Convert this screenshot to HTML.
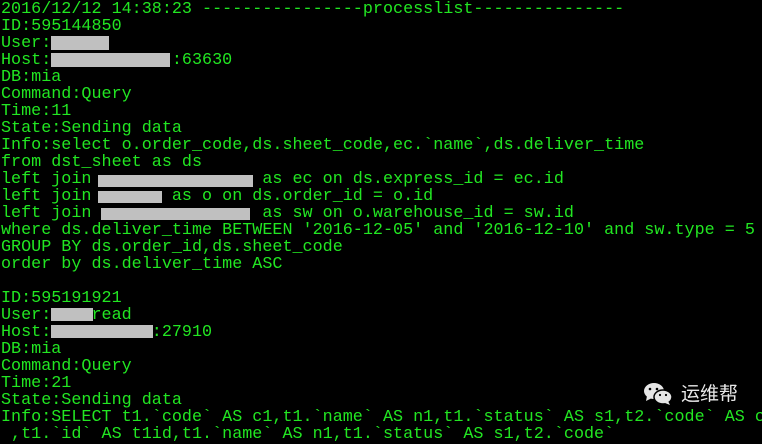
<!DOCTYPE html>
<html><head><meta charset="utf-8"><style>
html,body{margin:0;padding:0;background:#000;width:762px;height:430px;overflow:hidden}
pre{margin:0;padding:0 0 0 1px;font-family:"Liberation Mono",monospace;font-size:16.75px;line-height:17px;color:#22e622;white-space:pre;position:absolute;top:1px;left:0}
.b{position:absolute;background:#c0c0c0}
.logo{position:absolute;color:#e8e8e8;font-family:"Noto Sans CJK SC",sans-serif;font-size:19px;background:#000;padding:0 2px;line-height:22px}
</style></head><body>
<pre>2016/12/12 14:38:23 ----------------processlist---------------
ID:595144850
User:
Host:            :63630
DB:mia
Command:Query
Time:11
State:Sending data
Info:select o.order_code,ds.sheet_code,ec.`name`,ds.deliver_time
from dst_sheet as ds
left join                 as ec on ds.express_id = ec.id
left join        as o on ds.order_id = o.id
left join                 as sw on o.warehouse_id = sw.id
where ds.deliver_time BETWEEN '2016-12-05' and '2016-12-10' and sw.type = 5
GROUP BY ds.order_id,ds.sheet_code
order by ds.deliver_time ASC

ID:595191921
User:    read
Host:          :27910
DB:mia
Command:Query
Time:21
State:Sending data
Info:SELECT t1.`code` AS c1,t1.`name` AS n1,t1.`status` AS s1,t2.`code` AS c
 ,t1.`id` AS t1id,t1.`name` AS n1,t1.`status` AS s1,t2.`code`</pre>
<div class="b" style="left:51px;top:36px;width:58px;height:14px"></div>
<div class="b" style="left:51px;top:53px;width:119px;height:14px"></div>
<div class="b" style="left:98px;top:175px;width:155px;height:12px"></div>
<div class="b" style="left:98px;top:191px;width:64px;height:12px"></div>
<div class="b" style="left:101px;top:208px;width:149px;height:12px"></div>
<div class="b" style="left:51px;top:308px;width:42px;height:13px"></div>
<div class="b" style="left:51px;top:325px;width:102px;height:13px"></div>
<div style="position:absolute;left:640px;top:382px;width:122px;height:22px;background:#000"></div>
<svg style="position:absolute;left:643px;top:382px" width="32" height="24" viewBox="0 0 32 24">
<ellipse cx="11" cy="9" rx="10" ry="8" fill="#e6e6e6"/>
<path d="M4 14 L3 19 L9 16Z" fill="#e6e6e6"/>
<ellipse cx="20" cy="15" rx="9" ry="7" fill="#e6e6e6" stroke="#000" stroke-width="1.5"/>
<path d="M25 19 L27 23 L22 21Z" fill="#e6e6e6"/>
<circle cx="7" cy="7" r="1.3" fill="#000"/><circle cx="14" cy="7" r="1.3" fill="#000"/>
<circle cx="17" cy="13" r="1.1" fill="#000"/><circle cx="23" cy="13" r="1.1" fill="#000"/>
</svg>
<div class="logo" style="left:679px;top:382px">运维帮</div>
</body></html>
